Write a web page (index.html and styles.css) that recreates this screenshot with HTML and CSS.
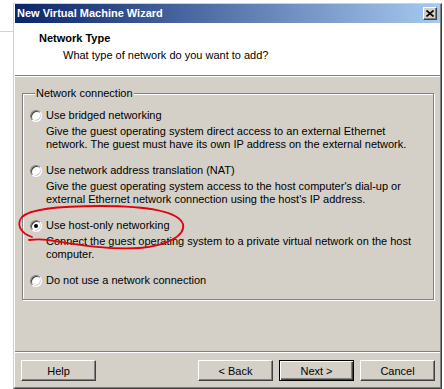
FILE: index.html
```html
<!DOCTYPE html>
<html lang="en">
<head>
    <meta charset="UTF-8">
    <title>New Virtual Machine Wizard</title>
    <link rel="stylesheet" href="styles.css">
</head>
<body>
    <div class="window">
        <div class="window-inner">
            <div class="titlebar">
                <span class="title">New Virtual Machine Wizard</span>
                <button class="close-btn" aria-label="Close">
                    <svg width="8" height="7" viewBox="0 0 8 7">
                        <path d="M0.5 0.5 L7.5 6.5 M7.5 0.5 L0.5 6.5" stroke="#000" stroke-width="1.6" fill="none"/>
                    </svg>
                </button>
            </div>
            <div class="header">
                <div class="header-title">Network Type</div>
                <div class="header-sub">What type of network do you want to add?</div>
            </div>
            <div class="main">
                <fieldset class="group">
                    <legend>Network connection</legend>
                    <div class="option">
                        <div class="option-row"><span class="radio"></span>Use bridged networking</div>
                        <p class="desc">Give the guest operating system direct access to an external Ethernet network. The guest must have its own IP address on the external network.</p>
                    </div>
                    <div class="option">
                        <div class="option-row"><span class="radio"></span>Use network address translation (NAT)</div>
                        <p class="desc">Give the guest operating system access to the host computer's dial-up or external Ethernet network connection using the host's IP address.</p>
                    </div>
                    <div class="option">
                        <div class="option-row"><span class="radio checked"></span>Use host-only networking</div>
                        <p class="desc">Connect the guest operating system to a private virtual network on the host computer.</p>
                    </div>
                    <div class="option">
                        <div class="option-row"><span class="radio"></span>Do not use a network connection</div>
                    </div>
                </fieldset>
            </div>
            <div class="footer">
                <button class="btn">Help</button>
                <div class="nav-buttons">
                    <button class="btn">&lt; Back</button>
                    <button class="btn default">Next &gt;</button>
                    <button class="btn">Cancel</button>
                </div>
            </div>
        </div>
    </div>

    <!-- red hand-drawn annotation -->
    <svg class="annotation" width="444" height="389" viewBox="0 0 444 389">
        <path d="M32 237 C20 233 16 224 22 217 C30 209 60 206 100 206 C145 206 178 211 183 224 C186 236 165 246 140 248 C110 250 80 245 55 241 C45 239 38 239 29 240"
              stroke="#e3000f" stroke-width="1.8" fill="none" stroke-linecap="round"/>
    </svg>
</body>
</html>
```

FILE: styles.css
```css
body, html {
    margin: 0;
    padding: 0;
    font-family: 'Liberation Sans', Arial, sans-serif;
    font-size: 11px;
}
body {
    position: relative;
    width: 444px;
    height: 389px;
    overflow: hidden;
    background: linear-gradient(#c8d6ea, #c8d6ea) no-repeat 0 31px / 13px 1px, #fff;
}
.window {
    box-sizing: border-box;
    margin: 3px 0 0 13px;
    width: 429px;
    height: 386px;
    border: 1px solid;
    border-color: #d4d0c8 #404040 #404040 #d4d0c8;
}
.window-inner {
    box-sizing: border-box;
    height: 100%;
    display: flex;
    flex-direction: column;
    background: #d4d0c8;
    border-left: 1px solid #fff;
    border-right: 1px solid #808080;
    border-bottom: 1px solid #808080;
}
.titlebar {
    height: 19px;
    display: flex;
    align-items: center;
    justify-content: space-between;
    padding: 0 2px 0 2px;
    background: linear-gradient(to right, #0a246a, #a6caf0);
}
.title {
    color: #fff;
    font-weight: bold;
    line-height: 13px;
}
.close-btn {
    box-sizing: border-box;
    width: 14px;
    height: 13px;
    padding: 0;
    margin-right: 1px;
    display: flex;
    align-items: center;
    justify-content: center;
    background: #d4d0c8;
    border: 1px solid;
    border-color: #fff #404040 #404040 #fff;
    box-shadow: inset -1px -1px 0 #808080;
}
.header {
    height: 53px;
    box-sizing: border-box;
    background: #fff;
    padding: 9px 0 0 24px;
    border-bottom: 1px solid #808080;
    line-height: 13px;
}
.header-title {
    font-weight: bold;
}
.header-sub {
    margin-top: 4px;
    padding-left: 24px;
}
.main {
    flex: 1;
    border-top: 1px solid #fff;
    padding: 10px 6px 0 7px;
}
.group {
    margin: 0;
    padding: 9px 7px 12px 7px;
    border: 1px solid #808080;
    box-shadow: inset 1px 1px 0 #fff, 1px 1px 0 #fff;
}
.group legend {
    padding: 0 1px;
    margin-left: 5px;
    line-height: 13px;
    background: #d4d0c8;
}
.option {
    margin-bottom: 13px;
    line-height: 13px;
}
.option:last-child {
    margin-bottom: 0;
}
.option-row {
    display: flex;
    align-items: center;
}
.radio {
    box-sizing: border-box;
    width: 12px;
    height: 12px;
    margin-right: 4px;
    border-radius: 50%;
    background: #fff;
    border: 1px solid;
    border-color: #808080 #fff #fff #808080;
    box-shadow: inset 1px 1px 0 #404040, inset -1px -1px 0 #d4d0c8;
    display: flex;
    align-items: center;
    justify-content: center;
}
.radio.checked::after {
    content: "";
    width: 4px;
    height: 4px;
    border-radius: 50%;
    background: #000;
}
.desc {
    margin: 3px 0 0 16px;
}
.footer {
    border-top: 1px solid #808080;
    box-shadow: inset 0 1px 0 #fff;
    display: flex;
    justify-content: space-between;
    padding: 8px 5px 6px 6px;
}
.nav-buttons {
    display: flex;
    gap: 6px;
}
.btn {
    box-sizing: border-box;
    width: 75px;
    height: 21px;
    padding: 0;
    font-family: 'Liberation Sans', Arial, sans-serif;
    font-size: 11px;
    color: #000;
    background: #d4d0c8;
    border: 1px solid;
    border-color: #fff #404040 #404040 #fff;
    box-shadow: inset -1px -1px 0 #808080;
}
.btn.default {
    border-color: #000;
    box-shadow: inset 1px 1px 0 #fff, inset -1px -1px 0 #404040, inset -2px -2px 0 #808080;
}
.annotation {
    position: absolute;
    left: 0;
    top: 0;
    pointer-events: none;
}
```
